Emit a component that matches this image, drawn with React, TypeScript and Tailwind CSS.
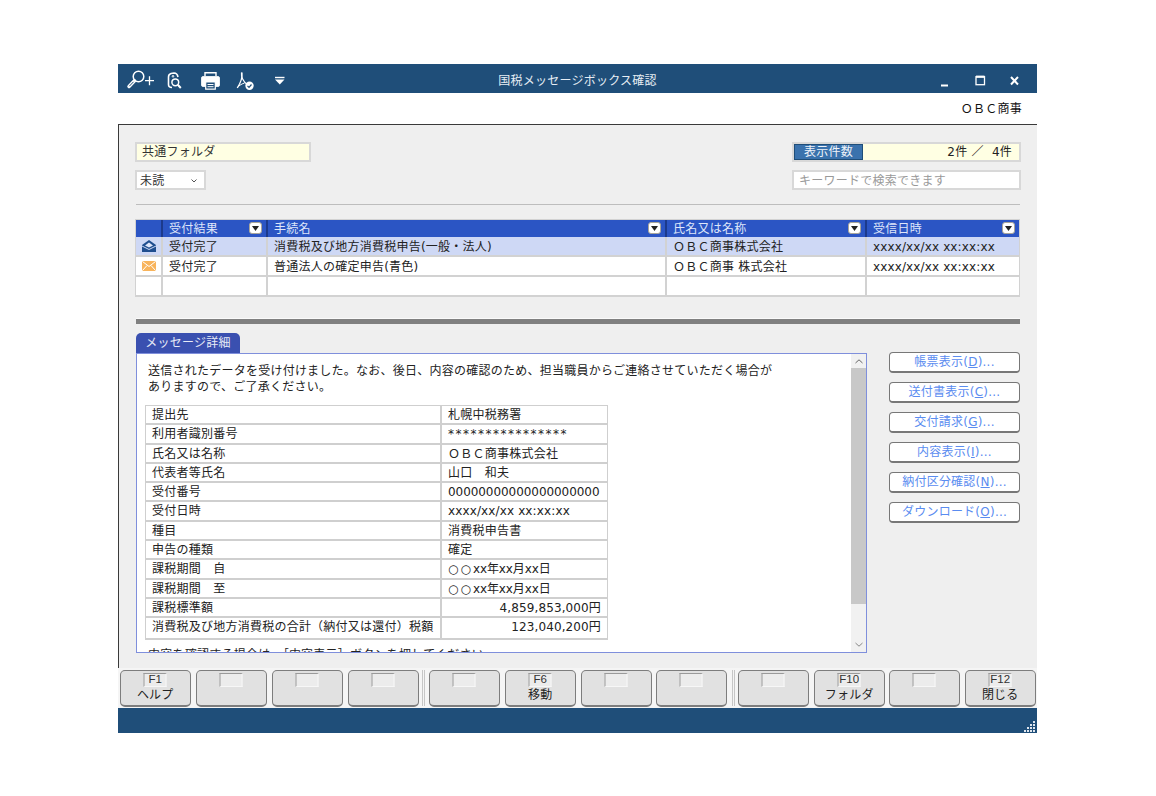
import React from "react";

const font = "[font-family:DejaVu_Sans,Noto_Sans_CJK_JP,sans-serif]";
const t = "text-[12px] tracking-[0.24px]";

const sideButtons = [
  ["帳票表示(", "D", ")...", "top-[352px]"],
  ["送付書表示(", "C", ")...", "top-[382px]"],
  ["交付請求(", "G", ")...", "top-[412px]"],
  ["内容表示(", "I", ")...", "top-[442px]"],
  ["納付区分確認(", "N", ")...", "top-[472px]"],
  ["ダウンロード(", "O", ")...", "top-[502px]"],
];

const fnKeys = [
  ["left-[120px]", "F1", "ヘルプ"],
  ["left-[196px]", "", ""],
  ["left-[272px]", "", ""],
  ["left-[348px]", "", ""],
  ["left-[429px]", "", ""],
  ["left-[505px]", "F6", "移動"],
  ["left-[581px]", "", ""],
  ["left-[656px]", "", ""],
  ["left-[738px]", "", ""],
  ["left-[814px]", "F10", "フォルダ"],
  ["left-[889px]", "", ""],
  ["left-[965px]", "F12", "閉じる"],
];

const circles = <span className="tracking-[2px]">○○</span>;

const details: [string, React.ReactNode, boolean?][] = [
  ["提出先", "札幌中税務署"],
  ["利用者識別番号", <span className="tracking-[1.5px]">****************</span>],
  ["氏名又は名称", "ＯＢＣ商事株式会社"],
  ["代表者等氏名", "山口　和夫"],
  ["受付番号", <span className="tracking-[-0.06px]">00000000000000000000</span>],
  ["受付日時", <span className="tracking-[0.13px]">xxxx/xx/xx xx:xx:xx</span>],
  ["種目", "消費税申告書"],
  ["申告の種類", "確定"],
  ["課税期間　自", <>{circles}<span className="tracking-[-0.1px]">xx年xx月xx日</span></>],
  ["課税期間　至", <>{circles}<span className="tracking-[-0.1px]">xx年xx月xx日</span></>],
  ["課税標準額", <span className="tracking-[0.12px]">4,859,853,000円</span>, true],
  ["消費税及び地方消費税の合計（納付又は還付）税額", <span className="tracking-[0.12px]">123,040,200円</span>, true],
];

function SortBtn() {
  return (
    <span className="absolute right-[4px] top-[2px] flex h-[12px] w-[13px] items-center justify-center rounded-[3px] border border-[#a9a59a] bg-white">
      <svg width="7" height="5" viewBox="0 0 7 5"><path d="M0 0h7L3.500 5z" fill="#222" /></svg>
    </span>
  );
}

function HeaderCell({ className, label, sort = true }: { className: string; label?: string; sort?: boolean }) {
  return (
    <div className={`relative h-[17px] pl-[6px] ${t} leading-[18px] text-[#dfe6fa] ${className}`}>
      {label}
      {sort && <SortBtn />}
    </div>
  );
}

function Row({ bg, icon, a, b, c, d }: { bg: string; icon?: React.ReactNode; a?: string; b?: string; c?: string; d?: string }) {
  const cell = `h-full overflow-hidden whitespace-nowrap pl-[6px] ${t} leading-[20px] text-[#222]`;
  const line = "border-r-2 border-[#d2d2d2]";
  return (
    <div className={`flex h-[20px] border-b-2 border-[#d2d2d2] ${bg}`}>
      <div className={`flex h-full w-[27px] items-center justify-center ${line}`}>{icon}</div>
      <div className={`${cell} ${line} w-[105px]`}>{a}</div>
      <div className={`${cell} ${line} w-[399px]`}>{b}</div>
      <div className={`${cell} ${line} w-[200px]`}>{c}</div>
      <div className={`${cell} w-[152px]`}>
        <span className="tracking-[0.13px]">{d}</span>
      </div>
    </div>
  );
}

export default function App() {
  return (
    <div className={`relative h-[796px] w-[1156px] overflow-hidden bg-white ${font}`}>
      {/* Title bar */}
      <div className="absolute left-[118px] top-[64px] h-[29px] w-[919px] bg-[#1f4e79]">
        <div className={`absolute inset-x-0 top-0 text-center ${t} leading-[34px] text-[#e6edf4]`}>国税メッセージボックス確認</div>
        <svg className="absolute left-0 top-0" width="180" height="29" viewBox="0 0 180 29" fill="none" stroke="#fff">
          {/* zoom + */}
          <circle cx="20.500" cy="12.500" r="5.300" strokeWidth="1.500" />
          <path d="M16.500 16.800 L11 22.500" strokeWidth="3.400" strokeLinecap="round" />
          <path d="M11.300 22.200 L15.500 17.800" stroke="#1f4e79" strokeWidth="1" />
          <path d="M27 16.700h9M31.500 12.200v9" strokeWidth="1.300" />
          {/* doc search */}
          <path d="M54 23.500c-2.500 0-3.500-1-3.500-3v-7.500c0-2 1-3 2.500-3.500l3-.500c1.500 0 3.500 1.500 4 4" strokeWidth="1.600" />
          <circle cx="55" cy="12.300" r="0.800" strokeWidth="1" />
          <circle cx="57.300" cy="18.300" r="3.400" strokeWidth="1.500" />
          <path d="M59.800 20.800l3 3.200" strokeWidth="2" />
          {/* printer */}
          <path d="M87 12V8.700h11V12" strokeWidth="1.400" />
          <path d="M85 12.500h15a1.500 1.500 0 0 1 1.500 1.500v7a1.500 1.500 0 0 1-1.500 1.500H85a1.500 1.500 0 0 1-1.500-1.500v-7a1.500 1.500 0 0 1 1.500-1.500z" fill="#fff" strokeWidth="0.800" />
          <path d="M87.700 18h9.600v7.200h-9.600z" fill="#1f4e79" stroke="#fff" strokeWidth="1.200" />
          <path d="M89.500 20.500h6M89.500 22.700h6" strokeWidth="1" />
          {/* acrobat check */}
          <path d="M123.500 8.500c-.5 4 1.500 9.500 6 12" strokeWidth="1.200" />
          <path d="M124 8.500c.5 4-1.500 10.500-4.800 15.500" strokeWidth="1.200" />
          <path d="M119.300 24c1-2 4-4 7.200-5" strokeWidth="1" />
          <circle cx="131.500" cy="21.800" r="4.200" fill="#fff" stroke="none" />
          <path d="M129.500 21.800l1.500 1.500 2.500-2.800" stroke="#1f4e79" strokeWidth="1.200" />
          {/* dropdown */}
          <path d="M157 13.500h9.500" strokeWidth="1.400" />
          <path d="M157 15.500h9.500l-4.700 5z" fill="#fff" stroke="none" />
        </svg>
        <svg className="absolute right-0 top-0" width="100" height="29" viewBox="0 0 100 29">
          <path d="M4 21.500h7" stroke="#fff" strokeWidth="2" />
          <rect x="39" y="12.700" width="8.500" height="8" fill="none" stroke="#fff" strokeWidth="1.300" />
          <path d="M39 12.700h8.500" stroke="#fff" strokeWidth="2.200" />
          <path d="M74 13l7 7.500M81 13l-7 7.500" stroke="#fff" strokeWidth="2" />
        </svg>
      </div>

      {/* Company strip */}
      <div className={`absolute right-[134px] top-[101px] ${t} leading-[16px] text-[#111]`}>ＯＢＣ商事</div>

      {/* Body */}
      <div className="absolute left-[118px] top-[124px] h-[546px] w-[919px] border-l border-t border-[#3a3a3a] bg-[#efefef]" />

      {/* Folder + filter */}
      <div className={`absolute left-[135px] top-[142px] h-[20px] w-[176px] border-2 border-[#d8d8d8] bg-[#ffffe3] pl-[5px] ${t} leading-[17px] text-[#333]`}>共通フォルダ</div>
      <div className={`absolute left-[135px] top-[170px] h-[20px] w-[71px] border-2 border-[#d8d8d8] bg-white pl-[3px] ${t} leading-[18px] text-[#333]`}>
        未読
        <svg className="absolute right-[7px] top-[7px]" width="6" height="4" viewBox="0 0 6 4" fill="none"><path d="M0.500 0.500L3 3l2.500-2.500" stroke="#555" /></svg>
      </div>

      {/* Count */}
      <div className="absolute left-[792px] top-[142px] flex h-[20px] w-[229px] border-2 border-[#d8d8d8] bg-[#ffffe3]">
        <div className={`h-full w-[69px] border border-[#1f4e79] bg-[#3a72ad] text-center ${t} leading-[15px] text-[#eef3f9]`}>表示件数</div>
        <div className={`flex-1 whitespace-pre pr-[7px] text-right ${t} leading-[17px] text-[#222]`}>2件 ／  4件</div>
      </div>
      <div className={`absolute left-[792px] top-[170px] h-[20px] w-[229px] border-2 border-[#d8d8d8] bg-white pl-[5px] ${t} leading-[18px] text-[#999]`}>キーワードで検索できます</div>

      <div className="absolute left-[136px] top-[204px] h-px w-[884px] bg-[#bdbdbd]" />

      {/* List */}
      <div className="absolute left-[135px] top-[219px] w-[885px] border border-b-0 border-[#d2d2d2]">
        <div className="flex bg-[#2b55c4]">
          <HeaderCell className="w-[27px] border-r-2 border-[#1c3a8c]" sort={false} />
          <HeaderCell className="w-[105px] border-r-2 border-[#1c3a8c]" label="受付結果" />
          <HeaderCell className="w-[399px] border-r-2 border-[#1c3a8c]" label="手続名" />
          <HeaderCell className="w-[200px] border-r-2 border-[#1c3a8c]" label="氏名又は名称" />
          <HeaderCell className="w-[152px]" label="受信日時" />
        </div>
        <Row
          bg="bg-[#ced8f5]"
          icon={
            <svg width="14" height="12" viewBox="0 0 14 12">
              <path d="M7 0L14 5v7H0V5z" fill="#1f4e8f" />
              <path d="M3 5.500L7 2.500l4 3-4 2z" fill="#dfe6fa" />
              <path d="M0 6l7 3.500L14 6" fill="none" stroke="#ced8f5" strokeWidth="1" />
            </svg>
          }
          a="受付完了"
          b="消費税及び地方消費税申告(一般・法人)"
          c="ＯＢＣ商事株式会社"
          d="xxxx/xx/xx xx:xx:xx"
        />
        <Row
          bg="bg-white"
          icon={
            <svg width="14" height="10" viewBox="0 0 14 10">
              <rect width="14" height="10" rx="1" fill="#f8b45c" />
              <path d="M0.500 0.500L7 5.500l6.500-5M0.500 9.500L5 4.500M13.500 9.500L9 4.500" fill="none" stroke="#fff" strokeWidth="1" />
            </svg>
          }
          a="受付完了"
          b="普通法人の確定申告(青色)"
          c="ＯＢＣ商事 株式会社"
          d="xxxx/xx/xx xx:xx:xx"
        />
        <Row bg="bg-white" />
      </div>

      {/* Divider */}
      <div className="absolute left-[136px] top-[318px] h-[6px] w-[884px] border-t border-[#fafafa] bg-[#808080]" />

      {/* Tab */}
      <div className={`absolute left-[136px] top-[333px] h-[20px] w-[104px] rounded-t-[5px] bg-[#3a50b0] text-center ${t} leading-[20px] text-[#e8ebf7]`}>メッセージ詳細</div>

      {/* Message panel */}
      <div className="absolute left-[136px] top-[353px] h-[300px] w-[731px] overflow-hidden border border-[#7f8fdc] bg-white">
        <div className={`absolute left-[11px] top-[9px] whitespace-nowrap ${t} leading-[16px] text-[#222]`}>
          <div>送信されたデータを受け付けました。なお、後日、内容の確認のため、担当職員からご連絡させていただく場合が</div>
          <div>ありますので、ご了承ください。</div>
        </div>
        <div className="absolute left-[8px] top-[51px] w-[463px] border border-b-2 border-[#cfcfcf]">
          {details.map(([k, v, right], i) => (
            <div key={k} className={`flex h-[19.3px] ${i < details.length - 1 ? "border-b-2 border-[#cfcfcf]" : ""}`}>
              <div className={`w-[296px] whitespace-nowrap border-r-2 border-[#cfcfcf] pl-[6px] ${t} leading-[18px] text-[#222]`}>{k}</div>
              <div className={`flex-1 whitespace-nowrap ${t} leading-[18px] text-[#222] ${right ? "pr-[6px] text-right" : "pl-[6px]"}`}>{v}</div>
            </div>
          ))}
        </div>
        <div className={`absolute left-[11px] top-[293px] whitespace-nowrap ${t} leading-[16px] text-[#222]`}>内容を確認する場合は、［内容表示］ボタンを押してください。</div>

        {/* Scrollbar */}
        <div className="absolute right-0 top-0 h-full w-[15px] bg-[#f1f1f1]">
          <div className="absolute inset-x-0 top-[14px] h-[236px] bg-[#c8c8c8]" />
          <svg className="absolute left-[4px] top-[5px]" width="8" height="5" viewBox="0 0 8 5" fill="none"><path d="M0.500 4L4 0.800 7.500 4" stroke="#666" /></svg>
          <svg className="absolute bottom-[5px] left-[4px]" width="8" height="5" viewBox="0 0 8 5" fill="none"><path d="M0.500 1L4 4.200 7.500 1" stroke="#888" /></svg>
        </div>
      </div>

      {/* Side buttons */}
      {sideButtons.map(([pre, key, post, top]) => (
        <div key={key} className={`absolute left-[889px] h-[21px] w-[131px] rounded-[4px] border border-b-2 border-[#777] bg-white text-center ${t} leading-[18px] text-[#5a8cf0] ${top}`}>
          {pre}<span className="underline">{key}</span>{post}
        </div>
      ))}

      {/* Function keys */}
      <div className="absolute left-[118px] top-[668px] h-[40px] w-[919px] bg-[#f5f5f5]" />
      <div className="absolute left-[422px] top-[670px] h-[36px] w-[3px] border-x border-[#c6c6c6]" />
      <div className="absolute left-[732px] top-[670px] h-[36px] w-[3px] border-x border-[#c6c6c6]" />
      {fnKeys.map(([left, f, label], i) => (
        <div key={i} className={`absolute top-[670px] h-[37px] w-[70.500px] rounded-[5px] border border-b-2 border-[#7d7d7d] bg-[#e1e1e1] ${left}`}>
          <div className="absolute left-1/2 top-[2px] h-[14px] w-[23px] -translate-x-1/2 border border-[#9a9a9a] border-b-[#f7f7f7] border-r-[#f7f7f7] bg-[#ececec] text-center [font-family:Liberation_Sans,sans-serif] text-[11.500px] leading-[11px] text-[#333]">{f}</div>
          <div className={`absolute inset-x-0 top-[15px] text-center ${t} leading-[18px] text-[#222]`}>{label}</div>
        </div>
      ))}

      {/* Status bar */}
      <div className="absolute left-[118px] top-[708px] h-[25px] w-[919px] bg-[#1f4e79]">
        <svg className="absolute bottom-[1px] right-[1px]" width="12" height="12" viewBox="0 0 12 12" fill="#dfe6ee">
          <rect x="9" y="1" width="2" height="2" />
          <rect x="6" y="4" width="2" height="2" /><rect x="9" y="4" width="2" height="2" />
          <rect x="3" y="7" width="2" height="2" /><rect x="6" y="7" width="2" height="2" /><rect x="9" y="7" width="2" height="2" />
          <rect x="0" y="10" width="2" height="2" /><rect x="3" y="10" width="2" height="2" /><rect x="6" y="10" width="2" height="2" /><rect x="9" y="10" width="2" height="2" />
        </svg>
      </div>
    </div>
  );
}
